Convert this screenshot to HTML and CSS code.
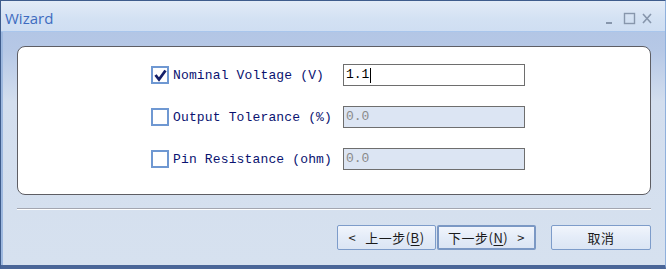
FILE: index.html
```html
<!DOCTYPE html>
<html lang="zh">
<head>
<meta charset="UTF-8">
<title>Wizard</title>
<link rel="stylesheet" href="styles.css">
</head>
<body>
<div class="window">
  <div class="titlebar">
    <span class="title">Wizard</span>
    <div class="controls">
      <svg width="60" height="16" viewBox="0 0 60 16">
        <rect x="5" y="11" width="6" height="2" fill="#8796ac"/>
        <rect x="23.5" y="2.5" width="10" height="10" fill="none" stroke="#8796ac" stroke-width="1.4"/>
        <path d="M42 3 L50 12 M50 3 L42 12" stroke="#8796ac" stroke-width="1.6"/>
      </svg>
    </div>
  </div>
  <div class="content">
    <div class="panel">
      <div class="row">
        <span class="check checked">
          <svg width="13" height="13" viewBox="0 0 13 13"><path d="M1.5 6 L5 10.5 L11.5 1.5" fill="none" stroke="#14206a" stroke-width="2.8"/></svg>
        </span>
        <label>Nominal Voltage (V)</label>
        <div class="field active">1.1<span class="caret"></span></div>
      </div>
      <div class="row">
        <span class="check"></span>
        <label>Output Tolerance (%)</label>
        <div class="field disabled">0.0</div>
      </div>
      <div class="row">
        <span class="check"></span>
        <label>Pin Resistance (ohm)</label>
        <div class="field disabled">0.0</div>
      </div>
    </div>
    <div class="separator"></div>
    <div class="buttons">
      <button class="btn"><span class="arrow">&lt;</span>上一步(<u>B</u>)</button>
      <button class="btn default">下一步(<u>N</u>)<span class="arrow right">&gt;</span></button>
      <button class="btn cancel">取消</button>
    </div>
  </div>
</div>
</body>
</html>
```

FILE: styles.css
```css
html, body {
  margin: 0;
  padding: 0;
}
body {
  width: 666px;
  height: 269px;
  overflow: hidden;
  background: #d5e0ef;
}
.window {
  height: 269px;
  box-sizing: border-box;
  border: 1px solid #3e5c8c;
  border-right-color: #8fb0dc;
  border-bottom: 4px solid #4a6698;
  box-shadow: inset 2px 0 #9db8df, inset -2px 0 #b8cde9;
  display: flex;
  flex-direction: column;
}
.titlebar {
  height: 31px;
  box-sizing: border-box;
  display: flex;
  align-items: center;
  justify-content: space-between;
  padding: 0 4px 0 4px;
  background: linear-gradient(#e2ebf7, #d3e1f3 60%, #cfdef2);
  border-bottom: 1px solid #a9c6ec;
}
.title {
  font-family: "Open Sans", "Noto Sans", sans-serif;
  font-size: 15px;
  color: #3e6cc0;
  margin-top: 3px;
}
.controls {
  display: flex;
  margin-top: 6px;
}
.content {
  flex: 1;
  padding: 14px 14px 0 16px;
  background: linear-gradient(#b3c6e5, #b6c8e6 18px, #d3deee 70px, #d6e1ef);
  box-shadow: inset 2px 0 #9db8df;
}
.panel {
  height: 149px;
  box-sizing: border-box;
  background: #ffffff;
  border: 1px solid #5e5e64;
  border-radius: 8px;
  padding: 17px 0 0 133px;
  display: flex;
  flex-direction: column;
  gap: 20px;
}
.row {
  display: grid;
  grid-template-columns: 18px 166px 182px;
  column-gap: 4px;
  align-items: center;
  height: 22px;
}
.check {
  width: 18px;
  height: 18px;
  box-sizing: border-box;
  border: 2px solid #6f98d2;
  background: #ffffff;
  display: flex;
  align-items: center;
  justify-content: center;
}
.row label {
  font-family: "Liberation Mono", monospace;
  font-size: 13px;
  letter-spacing: 0.15px;
  color: #0a1270;
  white-space: nowrap;
}
.field {
  height: 22px;
  box-sizing: border-box;
  border: 1px solid #6e6e6e;
  font-family: "Liberation Mono", monospace;
  font-size: 13px;
  line-height: 20px;
  padding-left: 2px;
  display: flex;
  align-items: center;
}
.field.active {
  background: #ffffff;
  color: #000000;
}
.field.disabled {
  background: #dce5f3;
  color: #8a8a8a;
}
.caret {
  display: inline-block;
  width: 1px;
  height: 15px;
  background: #000000;
  margin-left: 1px;
}
.separator {
  margin-top: 13px;
  height: 1px;
  background: #a3a6b0;
  border-bottom: 1px solid #ffffff;
}
.buttons {
  display: flex;
  justify-content: flex-end;
  margin-top: 15px;
  gap: 1px;
}
.btn {
  height: 25px;
  width: 99px;
  padding: 0;
  border: 1px solid #7d9cca;
  border-radius: 2px;
  background: linear-gradient(#f1f5fc, #e4ecf8 50%, #dbe5f4);
  font-family: "Noto Sans CJK SC", sans-serif;
  font-size: 13px;
  letter-spacing: 0.5px;
  color: #1a1a1a;
  cursor: pointer;
}
.btn u {
  text-underline-offset: 2px;
}
.arrow {
  margin-right: 9px;
}
.arrow.right {
  margin-right: 0;
  margin-left: 9px;
}
.btn.default {
  border: 2px solid #7b98c4;
}
.btn.cancel {
  width: 100px;
  margin-left: 14px;
}
```
